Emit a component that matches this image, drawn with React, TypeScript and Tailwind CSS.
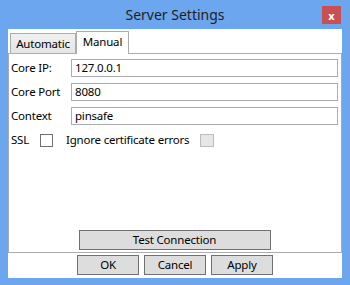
import React from "react";

const font = { fontFamily: '"Noto Sans", "Open Sans", sans-serif' };

function Row({ label, value }: { label: string; value: string }) {
  return (
    <div className="flex items-center h-[18px]">
      <div className="w-[60px] text-[11.5px] tracking-[-0.2px] leading-none text-black">{label}</div>
      <div className="flex-1 h-[18px] border border-[#abadb3] bg-white flex items-center pl-[3px] text-[11.5px] tracking-[-0.2px] leading-none text-black">
        {value}
      </div>
    </div>
  );
}

export default function App() {
  return (
    <div className="w-[350px] h-[285px] bg-[#6ca6ef] flex flex-col" style={font}>
      <div className="h-[29px] relative flex items-center justify-center shrink-0">
        <span className="text-[14px] text-[#1e1e1e] leading-none">Server Settings</span>
        <div className="absolute right-[9px] top-[6px] w-[19px] h-[18px] bg-[#c75050] flex items-center justify-center text-white text-[11px] font-bold leading-none">
          x
        </div>
      </div>
      <div className="mx-[8px] mb-[7px] flex-1 bg-white flex flex-col text-[11.5px] tracking-[-0.2px]">
        <div className="h-[24px] flex items-end pl-[2px] shrink-0">
          <div className="h-[20px] w-[66px] border border-b-0 border-[#acacac] bg-gradient-to-b from-[#f0f0f0] to-[#e5e5e5] flex items-center justify-center leading-none text-black">
            Automatic
          </div>
          <div className="relative z-10 -mb-px h-[23px] w-[53px] border border-b-0 border-[#acacac] bg-white flex items-center justify-center leading-none text-black pb-[2px]">
            Manual
          </div>
        </div>
        <div className="flex-1 border border-[#acacac] flex flex-col pt-[5px] pl-[2px] pr-[3px]">
          <div className="flex flex-col gap-[6px]">
            <Row label="Core IP:" value="127.0.0.1" />
            <Row label="Core Port" value="8080" />
            <Row label="Context" value="pinsafe" />
            <div className="flex items-center h-[18px] leading-none text-black">
              <span className="w-[29px]">SSL</span>
              <div className="w-[13px] h-[13px] border border-[#707070] bg-white" />
              <span className="ml-[13px]">Ignore certificate errors</span>
              <div className="ml-[11px] w-[14px] h-[13px] border border-[#bcbcbc] bg-[#e6e6e6]" />
            </div>
          </div>
          <div className="mt-auto mb-[2px] flex justify-center">
            <div className="w-[192px] h-[20px] border border-[#707070] bg-[#dddddd] flex items-center justify-center leading-none text-black">
              Test Connection
            </div>
          </div>
        </div>
        <div className="h-[25px] shrink-0 flex justify-center gap-[5px] pt-[2px]">
          {["OK", "Cancel", "Apply"].map((t) => (
            <div
              key={t}
              className="w-[62px] h-[20px] border border-[#707070] bg-[#dddddd] flex items-center justify-center leading-none text-black"
            >
              {t}
            </div>
          ))}
        </div>
      </div>
    </div>
  );
}
